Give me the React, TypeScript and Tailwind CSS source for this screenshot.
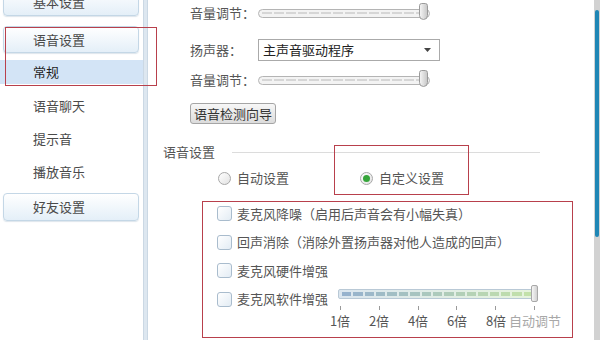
import React from "react";

const font = "font-['Noto_Sans_CJK_SC','Noto_Sans',sans-serif]";

function SideButton({ label, className = "" }: { label: string; className?: string }) {
  return (
    <div
      className={`ml-[3px] w-[136px] rounded-[4px] border border-[#c4d7e6] bg-gradient-to-b from-[#ffffff] to-[#e4eff8] shadow-[0_1px_1px_rgba(120,150,180,0.25)] flex items-center pl-[29px] text-[13px] text-[#4a4a4a] ${className}`}
    >
      {label}
    </div>
  );
}

function GraySlider() {
  return (
    <div className="relative w-[172px] h-[16px] flex items-center">
      <div className="w-full h-[9px] rounded-full border border-[#b4b4b4] bg-[#f3f3f3] flex items-center px-[3px] gap-[2px]">
        {Array.from({ length: 14 }).map((_, i) => (
          <div key={i} className="flex-1 h-[2px] bg-[#d6d6d6]" />
        ))}
      </div>
      <div className="absolute right-[2px] top-[-2px] w-[9px] h-[17px] rounded-t-[3px] rounded-b-[5px] border border-[#9a9a9a] bg-gradient-to-r from-[#f4f4f4] to-[#c9c9c9]" />
    </div>
  );
}

function Checkbox() {
  return (
    <div className="w-[15px] h-[15px] rounded-[3px] border border-[#a9bccd] bg-gradient-to-br from-[#ffffff] to-[#e3ecf4] shrink-0" />
  );
}

function Radio({ checked }: { checked?: boolean }) {
  return (
    <div className="w-[13px] h-[13px] rounded-full border border-[#a8a8a8] bg-gradient-to-br from-[#ffffff] to-[#e2e2e2] flex items-center justify-center shrink-0">
      {checked && <div className="w-[7px] h-[7px] rounded-full bg-[#35a53a]" />}
    </div>
  );
}

export default function App() {
  const labels = ["1倍", "2倍", "4倍", "6倍", "8倍", "自动调节"];
  return (
    <div className={`relative w-[600px] h-[340px] overflow-hidden bg-white flex ${font}`}>
      {/* Sidebar */}
      <div className="w-[143px] shrink-0 flex flex-col bg-white">
        <SideButton label="基本设置" className="mt-[-12px] h-[28px] pt-[0px]" />
        <SideButton label="语音设置" className="mt-[10px] h-[27px]" />
        <div className="mt-[7px] h-[24px] bg-[#d3e4f6] flex items-center pl-[33px] text-[13px] text-[#1e1e1e]">
          常规
        </div>
        <div className="mt-[5.5px] flex flex-col text-[13px] text-[#4a4a4a]">
          <div className="h-[33px] flex items-center pl-[33px]">语音聊天</div>
          <div className="h-[33px] flex items-center pl-[33px]">提示音</div>
          <div className="h-[33px] flex items-center pl-[33px]">播放音乐</div>
        </div>
        <SideButton label="好友设置" className="mt-[4.5px] h-[28px]" />
      </div>

      {/* Separator */}
      <div className="w-[5px] shrink-0 bg-[#dde7f0] border-l border-r border-[#cbd8e4]" />

      {/* Content */}
      <div className="flex-1 flex flex-col pl-[15px] text-[13px] text-[#555555]">
        <div className="ml-[27px] h-[26px] flex items-center">
          <div className="w-[68px]">音量调节：</div>
          <GraySlider />
        </div>
        <div className="ml-[27px] mt-[13px] h-[22px] flex items-center">
          <div className="w-[68px]">扬声器：</div>
          <div className="w-[182px] h-[22px] border border-[#aaaaaa] bg-white flex items-center pl-[4px] pr-[8px] text-[#222222]">
            <span className="flex-1">主声音驱动程序</span>
            <svg width="7" height="4" viewBox="0 0 7 4">
              <path d="M0 0 L7 0 L3.5 4 Z" fill="#444" />
            </svg>
          </div>
        </div>
        <div className="ml-[27px] mt-[6px] h-[26px] flex items-center">
          <div className="w-[68px]">音量调节：</div>
          <GraySlider />
        </div>
        <div className="ml-[27px] mt-[10px] self-start h-[21px] px-[3px] rounded-[3px] border border-[#a5a5a5] bg-gradient-to-b from-[#f7f7f7] to-[#dcdcdc] flex items-center text-[#333333]">
          语音检测向导
        </div>

        <div className="mt-[18px] h-[20px] flex items-center">
          <span>语音设置</span>
          <div className="ml-[17px] w-[308px] h-px bg-[#dcdcdc]" />
        </div>

        <div className="mt-[6px] h-[20px] flex items-center">
          <div className="ml-[55px]">
            <Radio />
          </div>
          <span className="ml-[6px]">自动设置</span>
          <div className="ml-[71px]">
            <Radio checked />
          </div>
          <span className="ml-[6px]">自定义设置</span>
        </div>

        {/* Checkbox group with red annotation border */}
        <div className="mt-[13px] ml-[39px] w-[371px] h-[137px] border border-[#b8404c] pl-[14px] flex flex-col gap-[5.5px]">
          <div className="h-[23px] flex items-center">
            <Checkbox />
            <span className="ml-[5px]">麦克风降噪（启用后声音会有小幅失真）</span>
          </div>
          <div className="h-[23px] flex items-center">
            <Checkbox />
            <span className="ml-[5px]">回声消除（消除外置扬声器对他人造成的回声）</span>
          </div>
          <div className="h-[23px] flex items-center">
            <Checkbox />
            <span className="ml-[5px]">麦克风硬件增强</span>
          </div>
          <div className="flex items-start">
            <div className="w-[121px] h-[23px] flex items-center shrink-0">
              <Checkbox />
              <span className="ml-[5px] whitespace-nowrap">麦克风软件增强</span>
            </div>
            <div className="mt-[1.5px] flex flex-col w-[199px] shrink-0">
              <div className="relative h-[10px]">
                <div className="w-full h-[10px] rounded-[2px] border border-[#b9c9d6] bg-gradient-to-r from-[#dbe6ef] to-[#e6f3dc] flex items-center px-[3px] gap-[2px]">
                  {Array.from({ length: 17 }).map((_, i) => (
                    <div
                      key={i}
                      className="flex-1 h-[4px]"
                      style={{
                        backgroundColor: `rgb(${Math.round(150 + (i / 16) * 45)}, ${Math.round(178 + (i / 16) * 47)}, ${Math.round(205 - (i / 16) * 35)})`,
                      }}
                    />
                  ))}
                </div>
                <div className="absolute right-[-1px] top-[-4px] w-[7px] h-[17px] rounded-[2px] border border-[#a8a8a8] bg-gradient-to-r from-[#f6f6f6] to-[#d2d2d2]" />
              </div>
              <div className="mt-[7px] h-[4px] flex justify-between px-[2px]">
                {labels.map((l) => (
                  <div key={l} className="w-px h-[4px] bg-[#9a9a9a]" />
                ))}
              </div>
              <div className="mt-[3px] ml-[-17.5px] flex h-[16px] items-center">
                {labels.map((l, i) => (
                  <div
                    key={l}
                    className={`w-[39px] shrink-0 flex justify-center whitespace-nowrap ${i === 5 ? "text-[#a8a8a8]" : "text-[#555555]"}`}
                  >
                    {l}
                  </div>
                ))}
              </div>
            </div>
          </div>
        </div>
      </div>

      {/* Scrollbar */}
      <div className="w-[6px] shrink-0 bg-[#d2d2d2] flex flex-col">
        <div className="mt-[10px] mx-[1px] h-[227px] rounded-[2px] bg-[#1f86b5]" />
      </div>

      {/* Red annotation boxes (overlays) */}
      <div className="absolute left-[5px] top-[27px] w-[152px] h-[59px] border border-[#b8404c] pointer-events-none" />
      <div className="absolute left-[334px] top-[145px] w-[135px] h-[50px] border border-[#b8404c] pointer-events-none" />
    </div>
  );
}
